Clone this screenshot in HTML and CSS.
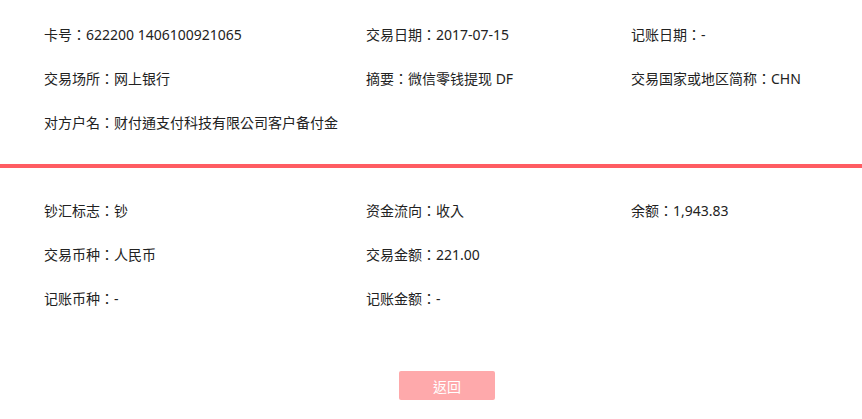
FILE: index.html
```html
<!DOCTYPE html>
<html>
<head>
    <title>交易详情</title>
    <link rel="stylesheet" href="styles.css">
</head>
<body>
    <div class="section top">
        <div class="item">卡号：622200 1406100921065</div>
        <div class="item">交易日期：2017-07-15</div>
        <div class="item">记账日期：-</div>
        <div class="item">交易场所：网上银行</div>
        <div class="item">摘要：微信零钱提现 DF</div>
        <div class="item">交易国家或地区简称：CHN</div>
        <div class="item wide">对方户名：财付通支付科技有限公司客户备付金</div>
    </div>

    <div class="divider"></div>

    <div class="section bottom">
        <div class="item">钞汇标志：钞</div>
        <div class="item">资金流向：收入</div>
        <div class="item">余额：1,943.83</div>
        <div class="item">交易币种：人民币</div>
        <div class="item">交易金额：221.00</div>
        <div class="item"></div>
        <div class="item">记账币种：-</div>
        <div class="item">记账金额：-</div>
    </div>

    <div class="actions">
        <button class="back-btn">返回</button>
    </div>
</body>
</html>
```

FILE: styles.css
```css
body { margin: 0; font-family: "Noto Sans", "Noto Sans CJK TC", sans-serif; font-size: 14px; color: #222; background: #fff; }
.section { display: grid; grid-template-columns: 322px 265px 1fr; padding-left: 44px; }
.section.top { padding-top: 13px; padding-bottom: 19px; }
.section.bottom { padding-top: 21px; }
.item { height: 44px; line-height: 44px; white-space: nowrap; }
.item.wide { grid-column: 1 / 4; }
.divider { height: 4px; background: #ff5c62; }
.actions { display: flex; justify-content: center; padding-top: 50px; }
.back-btn { width: 96px; height: 29px; margin-left: 32px; border: none; border-radius: 2px; background: #fea9ab; color: #fff; font-family: inherit; font-size: 14px; cursor: pointer; }
```
